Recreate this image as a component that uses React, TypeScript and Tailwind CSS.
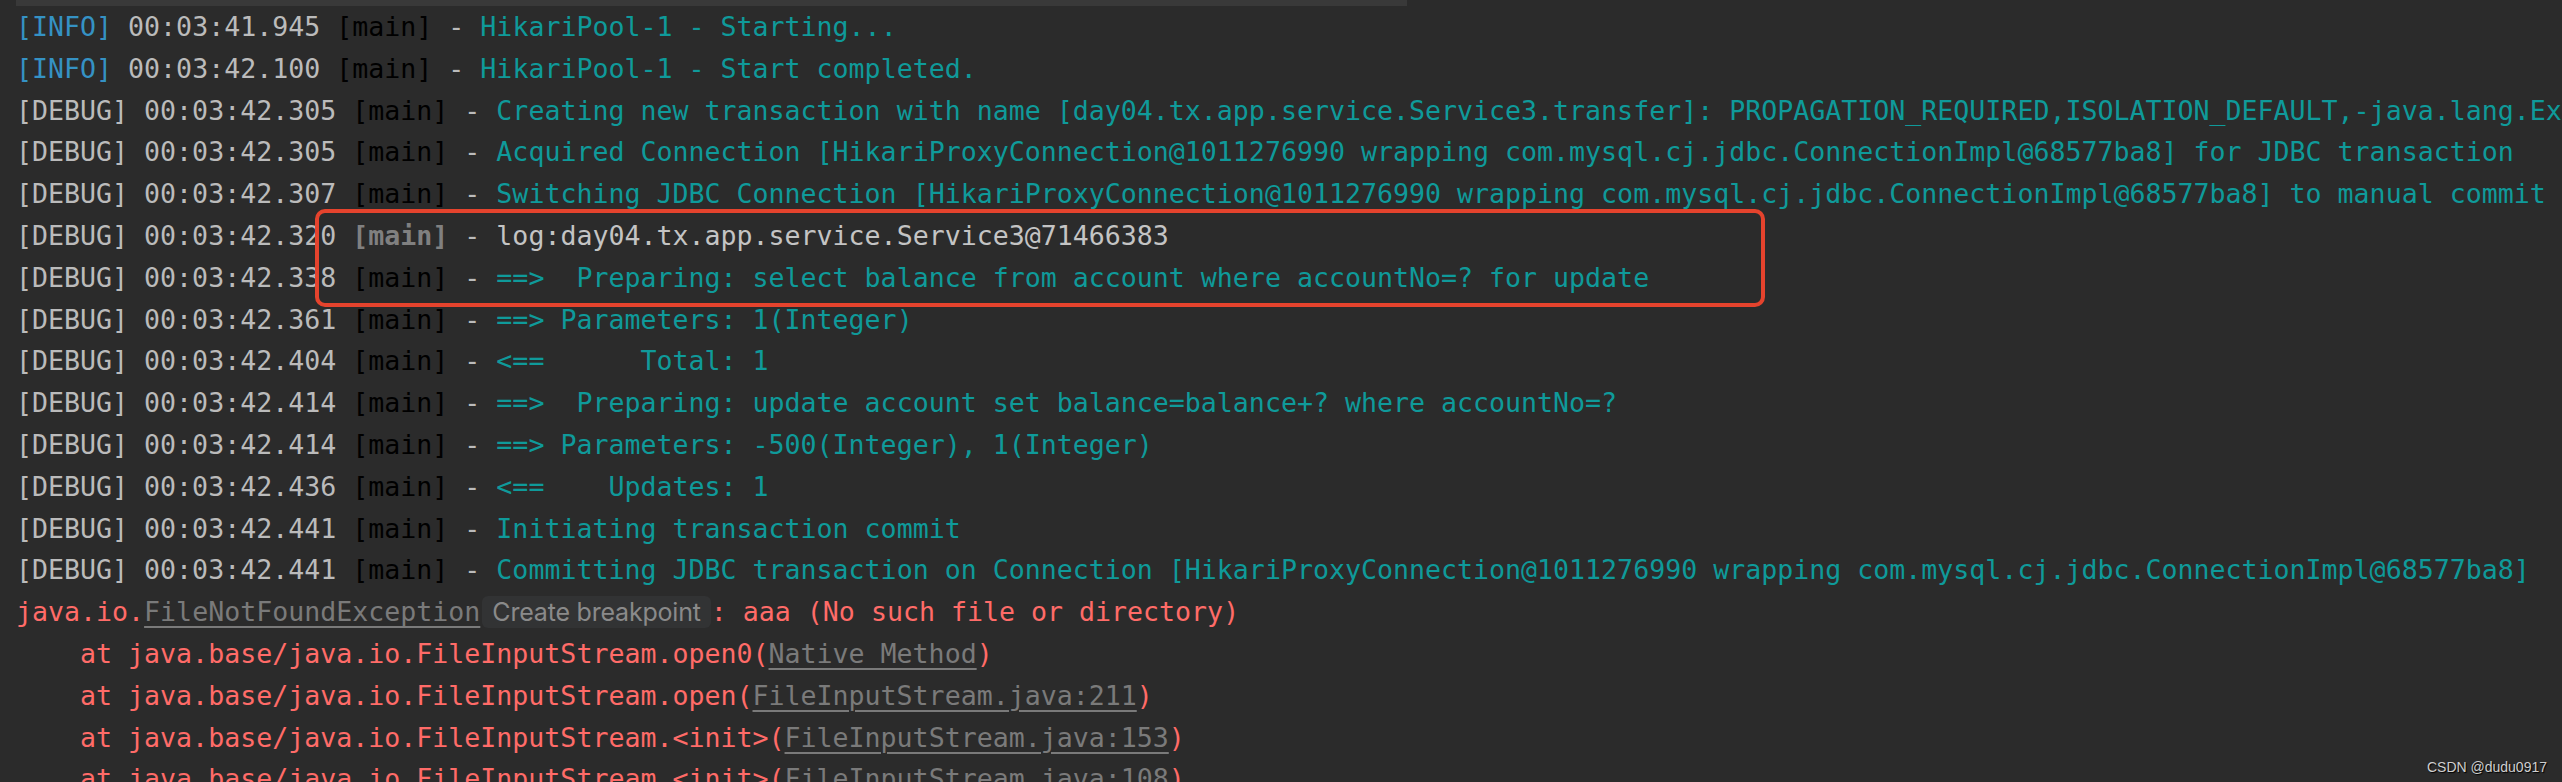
import React from "react";

type Seg = { t: string; c: string; u?: boolean; b?: boolean };

const BLUE = "text-[#3592c4]";
const GRAY = "text-[#bbbbbb]";
const BLACK = "text-[#000000]";
const TEAL = "text-[#0f9a9a]";
const RED = "text-[#ff6b68]";
const LINK = "text-[#7a7a7a]";

function dbg(ts: string, msg: string, opts?: { mainGray?: boolean; msgColor?: string }): Seg[] {
  return [
    { t: "[DEBUG] " + ts + " ", c: GRAY },
    opts?.mainGray ? { t: "[main]", c: "text-[#808080]", b: true } : { t: "[main]", c: BLACK },
    { t: " - ", c: GRAY },
    { t: msg, c: opts?.msgColor ?? TEAL },
  ];
}

function info(ts: string, msg: string): Seg[] {
  return [
    { t: "[INFO]", c: BLUE },
    { t: " " + ts + " ", c: GRAY },
    { t: "[main]", c: BLACK },
    { t: " - ", c: GRAY },
    { t: msg, c: TEAL },
  ];
}

const lines: Seg[][] = [
  info("00:03:41.945", "HikariPool-1 - Starting..."),
  info("00:03:42.100", "HikariPool-1 - Start completed."),
  dbg(
    "00:03:42.305",
    "Creating new transaction with name [day04.tx.app.service.Service3.transfer]: PROPAGATION_REQUIRED,ISOLATION_DEFAULT,-java.lang.Exception"
  ),
  dbg(
    "00:03:42.305",
    "Acquired Connection [HikariProxyConnection@1011276990 wrapping com.mysql.cj.jdbc.ConnectionImpl@68577ba8] for JDBC transaction"
  ),
  dbg(
    "00:03:42.307",
    "Switching JDBC Connection [HikariProxyConnection@1011276990 wrapping com.mysql.cj.jdbc.ConnectionImpl@68577ba8] to manual commit"
  ),
  dbg("00:03:42.320", "log:day04.tx.app.service.Service3@71466383", { mainGray: true, msgColor: "text-[#c4c4c4]" }),
  dbg("00:03:42.338", "==>  Preparing: select balance from account where accountNo=? for update"),
  dbg("00:03:42.361", "==> Parameters: 1(Integer)"),
  dbg("00:03:42.404", "<==      Total: 1"),
  dbg("00:03:42.414", "==>  Preparing: update account set balance=balance+? where accountNo=?"),
  dbg("00:03:42.414", "==> Parameters: -500(Integer), 1(Integer)"),
  dbg("00:03:42.436", "<==    Updates: 1"),
  dbg("00:03:42.441", "Initiating transaction commit"),
  dbg(
    "00:03:42.441",
    "Committing JDBC transaction on Connection [HikariProxyConnection@1011276990 wrapping com.mysql.cj.jdbc.ConnectionImpl@68577ba8]"
  ),
];

const stack: [string, string][] = [
  ["open0(", "Native Method"],
  ["open(", "FileInputStream.java:211"],
  ["<init>(", "FileInputStream.java:153"],
  ["<init>(", "FileInputStream.java:108"],
];

export default function App() {
  return (
    <div
      className="relative w-[2562px] h-[782px] overflow-hidden bg-[#2b2b2b] text-[26.6px] leading-[41.8px] whitespace-pre"
      style={{ fontFamily: '"DejaVu Sans Mono", "Liberation Mono", monospace' }}
    >
      <div className="ml-4 w-[1391px] h-[6px] bg-[#393939]" />
      <div className="pl-4 flex flex-col">
        {lines.map((segs, i) => (
          <div key={i} className="h-[41.8px]">
            {segs.map((s, j) => (
              <span key={j} className={`${s.c} ${s.b ? "font-bold" : ""}`}>
                {s.t}
              </span>
            ))}
          </div>
        ))}
        <div className="h-[41.8px] flex items-center">
          <span className={RED}>java.io.</span>
          <span className={`${LINK} underline underline-offset-[5px] decoration-[1.5px]`}>FileNotFoundException</span>
          <span
            className="ml-[2px] inline-flex items-center h-[32px] pl-[10px] pr-[10px] rounded-[6px] bg-[#323334] text-[#8a8a8a] text-[25px] leading-none tracking-[-0.2px]"
            style={{ fontFamily: 'Inter, "Noto Sans", sans-serif' }}
          >
            Create breakpoint
          </span>
          <span className={RED}>: aaa (No such file or directory)</span>
        </div>
        {stack.map(([m, link], i) => (
          <div key={i} className="h-[41.8px]">
            <span className={RED}>{"    at java.base/java.io.FileInputStream." + m}</span>
            <span className={`${LINK} underline underline-offset-[5px] decoration-[1.5px]`}>{link}</span>
            <span className={RED}>)</span>
          </div>
        ))}
      </div>

      <div className="absolute left-[315px] top-[209px] w-[1450px] h-[98px] border-4 border-[#e5432d] rounded-[10px]" />

      <div
        className="absolute right-[15px] bottom-[8px] text-[14px] leading-none text-[#cfcfcf] [text-shadow:1px_1px_1px_#000]"
        style={{ fontFamily: '"Liberation Sans", Arial, sans-serif' }}
      >
        CSDN @dudu0917
      </div>
    </div>
  );
}
